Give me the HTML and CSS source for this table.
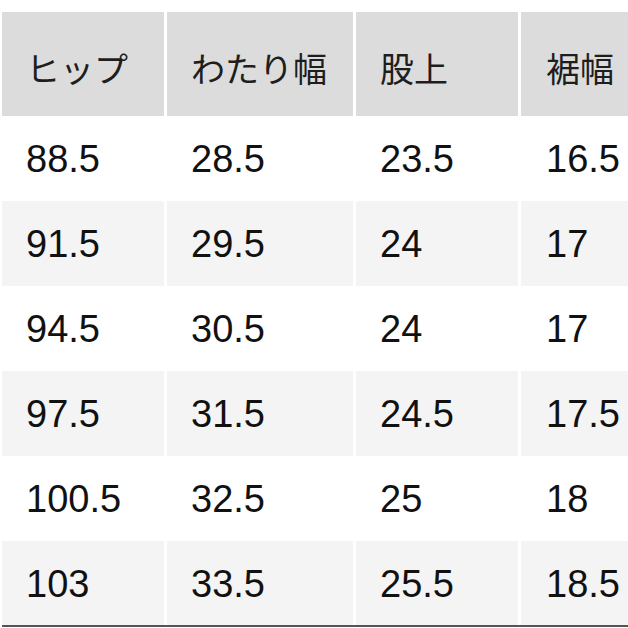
FILE: index.html
```html
<!DOCTYPE html>
<html lang="ja">
<head>
<meta charset="utf-8">
<link rel="stylesheet" href="styles.css">
</head>
<body>
<div class="table">
  <div class="row head">
    <div class="cell c1">ヒップ</div>
    <div class="cell c2">わたり幅</div>
    <div class="cell c3">股上</div>
    <div class="cell c4">裾幅</div>
  </div>
  <div class="row">
    <div class="cell c1">88.5</div>
    <div class="cell c2">28.5</div>
    <div class="cell c3">23.5</div>
    <div class="cell c4">16.5</div>
  </div>
  <div class="row alt">
    <div class="cell c1">91.5</div>
    <div class="cell c2">29.5</div>
    <div class="cell c3">24</div>
    <div class="cell c4">17</div>
  </div>
  <div class="row">
    <div class="cell c1">94.5</div>
    <div class="cell c2">30.5</div>
    <div class="cell c3">24</div>
    <div class="cell c4">17</div>
  </div>
  <div class="row alt">
    <div class="cell c1">97.5</div>
    <div class="cell c2">31.5</div>
    <div class="cell c3">24.5</div>
    <div class="cell c4">17.5</div>
  </div>
  <div class="row">
    <div class="cell c1">100.5</div>
    <div class="cell c2">32.5</div>
    <div class="cell c3">25</div>
    <div class="cell c4">18</div>
  </div>
  <div class="row alt">
    <div class="cell c1">103</div>
    <div class="cell c2">33.5</div>
    <div class="cell c3">25.5</div>
    <div class="cell c4">18.5</div>
  </div>
</div>
</body>
</html>
```
FILE: styles.css
```css
html, body {
  margin: 0;
  padding: 0;
  background: #ffffff;
  width: 628px;
  height: 628px;
  overflow: hidden;
}
.table {
  padding: 12px 0 0 2px;
  font-family: "Liberation Sans", "Noto Sans CJK JP", sans-serif;
  color: #111111;
}
.row {
  display: flex;
  column-gap: 3px;
  height: 85px;
}
.row:last-child {
  height: 84px;
  border-bottom: 2px solid #555555;
}
.cell {
  display: flex;
  align-items: center;
  padding-left: 24px;
  padding-top: 2px;
  box-sizing: border-box;
  font-size: 38px;
  white-space: nowrap;
}
.c1 { width: 162px; flex: none; }
.c2 { width: 186px; flex: none; }
.c3 { width: 162px; flex: none; }
.c4 { width: 130px; flex: none; padding-left: 25px; }
.head {
  height: 104px;
}
.head .cell {
  background: #dcdcdc;
  font-family: "Noto Sans CJK JP", sans-serif;
  font-size: 34px;
  color: #1e1e1e;
  padding-top: 6px;
}
.alt .cell {
  background: #f4f4f4;
}
```
